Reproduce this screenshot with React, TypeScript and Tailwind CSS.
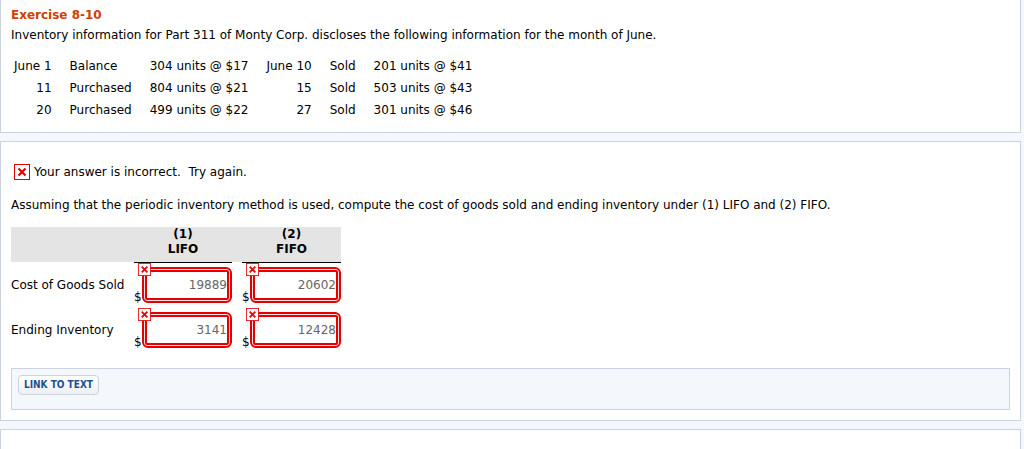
import clsx from "clsx";

const transactions = [
  ["June 1", "Balance", "304 units @ $17", "June 10", "Sold", "201 units @ $41"],
  ["11", "Purchased", "804 units @ $21", "15", "Sold", "503 units @ $43"],
  ["20", "Purchased", "499 units @ $22", "27", "Sold", "301 units @ $46"],
];

const answers = [
  { label: "Cost of Goods Sold", lifo: "19889", fifo: "20602" },
  { label: "Ending Inventory", lifo: "3141", fifo: "12428" },
];

const WrongMark = ({ className }: { className?: string }) => (
  <svg viewBox="0 0 16 16" className={className} aria-hidden="true">
    <rect x="0.5" y="0.5" width="15" height="15" fill="#fff" stroke="#e60000" />
    <path d="M4.5 4.5L11.5 11.5M11.5 4.5L4.5 11.5" stroke="#e60000" strokeWidth="2.2" />
  </svg>
);

const AnswerField = ({ label, value }: { label: string; value: string }) => (
  <div className="relative flex items-end">
    <span className="w-2 leading-3">$</span>
    <div className="min-w-0 flex-1 rounded-md border-2 border-[#e60000] bg-[#fbe4e4] p-px">
      <input
        aria-label={label}
        defaultValue={value}
        className="block h-[30px] w-full rounded-xs border-2 border-[#e60000] bg-white text-right text-[#666] outline-none"
      />
    </div>
    <WrongMark className="absolute -top-1 left-1 size-[13px]" />
  </div>
);

const App = () => {
  return (
    <div className="flex min-h-screen flex-col gap-2 bg-[#f4f8fc] pr-[3px] font-['DejaVu_Sans',Verdana,sans-serif] text-[12px] leading-5 text-black">
      <section className="border border-t-0 border-[#cbd3e0] bg-white px-2.5 pt-[5px] pb-[11px]">
        <h1 className="font-bold text-[#d04000]">Exercise 8-10</h1>
        <p>Inventory information for Part 311 of Monty Corp. discloses the following information for the month of June.</p>
        <table className="mt-2.5 ml-[3px]">
          <tbody>
            {transactions.map((row) => (
              <tr key={row[0]} className="h-[22px]">
                {row.map((cell, i) => (
                  <td key={i} className={clsx("p-0 pr-[18px] whitespace-nowrap", i % 3 === 0 && "text-right")}>
                    {cell}
                  </td>
                ))}
              </tr>
            ))}
          </tbody>
        </table>
      </section>

      <section className="border border-[#cbd3e0] bg-white px-2.5 pt-5 pb-2.5">
        <div className="flex items-center gap-1 pl-[3px]">
          <WrongMark className="size-4" />
          <p className="whitespace-pre">Your answer is incorrect.  Try again.</p>
        </div>
        <p className="mt-[13px]">
          Assuming that the periodic inventory method is used, compute the cost of goods sold and ending inventory under (1) LIFO and (2) FIFO.
        </p>

        <table className="mt-3 w-[330px] table-fixed">
          <thead>
            <tr className="h-[35px] bg-[#e4e4e4] align-top leading-[15px]">
              <td className="w-[123px]" />
              <th className="w-[98px] border-b border-black p-0">(1)<br />LIFO</th>
              <td />
              <th className="w-[99px] border-b border-black p-0">(2)<br />FIFO</th>
            </tr>
          </thead>
          <tbody>
            {answers.map(({ label, lifo, fifo }) => (
              <tr key={label} className="h-[45px]">
                <th className="p-0 text-left font-normal">{label}</th>
                <td className="p-0">
                  <AnswerField label={`${label}, LIFO`} value={lifo} />
                </td>
                <td />
                <td className="p-0">
                  <AnswerField label={`${label}, FIFO`} value={fifo} />
                </td>
              </tr>
            ))}
          </tbody>
        </table>

        <div className="mt-4 h-[42px] border border-[#cbd3e0] bg-[#f4f8fc] p-1.5">
          <button className="block h-5 rounded border border-[#cbd3e0] bg-linear-to-b from-white to-[#eceff5] px-[5px] font-['DejaVu_Sans_Condensed','DejaVu_Sans',sans-serif] text-[10px] leading-4 font-bold text-[#205090]">
            LINK TO TEXT
          </button>
        </div>
      </section>

      <section className="min-h-4 flex-1 border border-b-0 border-[#cbd3e0] bg-white" />
    </div>
  );
};

export default App;
